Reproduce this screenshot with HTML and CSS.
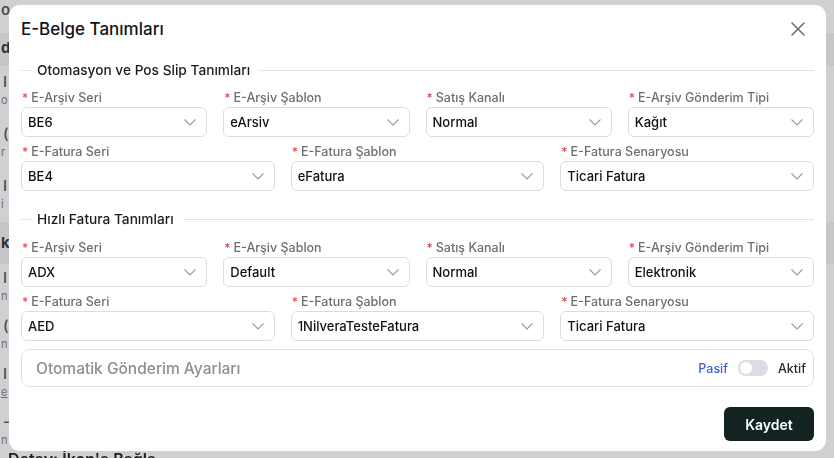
FILE: index.html
```html
<!DOCTYPE html>
<html lang="tr">
<head>
<meta charset="utf-8">
<title>E-Belge Tanımları</title>
<link rel="stylesheet" href="styles.css">
</head>
<body>
<div class="page">
  <div class="bg-top">o</div>
  <div class="bg-band">d</div>
  <div class="bg-item"><b>I</b><small>o</small></div>
  <div class="bg-item"><b>(</b><small>r</small></div>
  <div class="bg-item"><b>I</b><small>i</small></div>
  <div class="bg-band bg-band2">k</div>
  <div class="bg-item bg-tight"><b>I</b><small>n</small></div>
  <div class="bg-item bg-tight"><b>(</b><small>n</small></div>
  <div class="bg-item bg-tight"><b>I</b><small class="bg-link">e</small></div>
  <div class="bg-item bg-tight"><b>-</b><small>n</small></div>
  <div class="bg-foot">Detay: İkon'a Bağla</div>
</div>

<div class="modal">
  <header class="modal-head">
    <h1 class="modal-title">E-Belge Tanımları</h1>
    <button class="close" aria-label="Kapat">
      <svg width="14" height="14" viewBox="0 0 14 14"><path d="M1 1L13 13M13 1L1 13" stroke="#6b6b6b" stroke-width="1.5" fill="none" stroke-linecap="round"/></svg>
    </button>
  </header>

  <div class="modal-body">
    <div class="divider"><span class="divider-text">Otomasyon ve Pos Slip Tanımları</span></div>

    <div class="grid g4">
      <div class="field"><label class="label"><i>*</i>E-Arşiv Seri</label><div class="select"><span>BE6</span><svg class="chev" viewBox="0 0 12 7"><path d="M0.5 0.5L6 6L11.5 0.5"/></svg></div></div>
      <div class="field"><label class="label"><i>*</i>E-Arşiv Şablon</label><div class="select"><span>eArsiv</span><svg class="chev" viewBox="0 0 12 7"><path d="M0.5 0.5L6 6L11.5 0.5"/></svg></div></div>
      <div class="field"><label class="label"><i>*</i>Satış Kanalı</label><div class="select"><span>Normal</span><svg class="chev" viewBox="0 0 12 7"><path d="M0.5 0.5L6 6L11.5 0.5"/></svg></div></div>
      <div class="field"><label class="label"><i>*</i>E-Arşiv Gönderim Tipi</label><div class="select"><span>Kağıt</span><svg class="chev" viewBox="0 0 12 7"><path d="M0.5 0.5L6 6L11.5 0.5"/></svg></div></div>
    </div>
    <div class="grid g3">
      <div class="field"><label class="label"><i>*</i>E-Fatura Seri</label><div class="select"><span>BE4</span><svg class="chev" viewBox="0 0 12 7"><path d="M0.5 0.5L6 6L11.5 0.5"/></svg></div></div>
      <div class="field"><label class="label"><i>*</i>E-Fatura Şablon</label><div class="select"><span>eFatura</span><svg class="chev" viewBox="0 0 12 7"><path d="M0.5 0.5L6 6L11.5 0.5"/></svg></div></div>
      <div class="field"><label class="label"><i>*</i>E-Fatura Senaryosu</label><div class="select"><span>Ticari Fatura</span><svg class="chev" viewBox="0 0 12 7"><path d="M0.5 0.5L6 6L11.5 0.5"/></svg></div></div>
    </div>

    <div class="divider divider-2"><span class="divider-text">Hızlı Fatura Tanımları</span></div>

    <div class="grid g4">
      <div class="field"><label class="label"><i>*</i>E-Arşiv Seri</label><div class="select"><span>ADX</span><svg class="chev" viewBox="0 0 12 7"><path d="M0.5 0.5L6 6L11.5 0.5"/></svg></div></div>
      <div class="field"><label class="label"><i>*</i>E-Arşiv Şablon</label><div class="select"><span>Default</span><svg class="chev" viewBox="0 0 12 7"><path d="M0.5 0.5L6 6L11.5 0.5"/></svg></div></div>
      <div class="field"><label class="label"><i>*</i>Satış Kanalı</label><div class="select"><span>Normal</span><svg class="chev" viewBox="0 0 12 7"><path d="M0.5 0.5L6 6L11.5 0.5"/></svg></div></div>
      <div class="field"><label class="label"><i>*</i>E-Arşiv Gönderim Tipi</label><div class="select"><span>Elektronik</span><svg class="chev" viewBox="0 0 12 7"><path d="M0.5 0.5L6 6L11.5 0.5"/></svg></div></div>
    </div>
    <div class="grid g3">
      <div class="field"><label class="label"><i>*</i>E-Fatura Seri</label><div class="select"><span>AED</span><svg class="chev" viewBox="0 0 12 7"><path d="M0.5 0.5L6 6L11.5 0.5"/></svg></div></div>
      <div class="field"><label class="label"><i>*</i>E-Fatura Şablon</label><div class="select"><span>1NilveraTesteFatura</span><svg class="chev" viewBox="0 0 12 7"><path d="M0.5 0.5L6 6L11.5 0.5"/></svg></div></div>
      <div class="field"><label class="label"><i>*</i>E-Fatura Senaryosu</label><div class="select"><span>Ticari Fatura</span><svg class="chev" viewBox="0 0 12 7"><path d="M0.5 0.5L6 6L11.5 0.5"/></svg></div></div>
    </div>

    <div class="panel">
      <span class="panel-title">Otomatik Gönderim Ayarları</span>
      <div class="switch-wrap">
        <span class="sw-off">Pasif</span>
        <span class="switch"><span class="knob"></span></span>
        <span class="sw-on">Aktif</span>
      </div>
    </div>
  </div>

  <footer class="modal-foot">
    <button class="save">Kaydet</button>
  </footer>
</div>
</body>
</html>
```

FILE: styles.css
```css
* { box-sizing: border-box; }

html, body {
  margin: 0;
  padding: 0;
}

body {
  width: 834px;
  height: 458px;
  overflow: hidden;
  background: #d0d0d2;
  font-family: "Inter", "Noto Sans", sans-serif;
  color: #1a1a1a;
}

/* ---------- background page (behind the mask) ---------- */
.page {
  color: #4a4a4c;
  font-size: 15px;
}
.bg-top {
  height: 33px;
  padding: 2px 0 0 1px;
  line-height: 16px;
  font-weight: 600;
}
.bg-band {
  height: 33px;
  line-height: 30px;
  padding-left: 1px;
  background: #c6c6c8;
  font-weight: 700;
  color: #333;
}
.bg-band2 {
  height: 42px;
  line-height: 42px;
}
.bg-item {
  height: 52px;
  padding-top: 6px;
}
.bg-tight { height: 48px; padding-top: 4px; }
.bg-item b {
  display: block;
  font-weight: 500;
  line-height: 20px;
  padding-left: 3px;
}
.bg-item small {
  display: block;
  font-size: 11px;
  line-height: 16px;
  color: #6f6f71;
  padding-left: 1px;
}
.bg-link { text-decoration: underline; }
.bg-foot {
  position: fixed;
  left: 8px;
  top: 449px;
  font-size: 16px;
  font-weight: 600;
  color: #222;
}

/* ---------- modal ---------- */
.modal {
  position: fixed;
  left: 9px;
  top: 5px;
  width: 817px;
  height: 446px;
  background: #fff;
  border-radius: 11px;
  display: flex;
  flex-direction: column;
}

.modal-head {
  height: 48px;
  padding: 0 12px;
  display: flex;
  align-items: center;
  justify-content: space-between;
}
.modal-title {
  margin: 0;
  font-size: 17px;
  font-weight: 500;
  color: #141414;
}
.close {
  border: 0;
  background: none;
  padding: 0;
  width: 14px;
  height: 14px;
  margin-right: 9px;
  display: flex;
}

.modal-body {
  padding: 0 12px;
}

.divider {
  display: flex;
  align-items: center;
  height: 22px;
  margin: 6px 0 8px;
}
.divider::before,
.divider::after {
  content: "";
  height: 1px;
  background: #e3e3e5;
}
.divider::before { width: 10px; }
.divider::after { flex: 1; }
.divider-text {
  padding: 0 9px 0 6px;
  font-size: 13.7px;
  font-weight: 500;
  color: #1c1c1c;
  white-space: nowrap;
}
.divider-2 { margin-top: 17px; margin-bottom: 9px; }

.grid {
  display: grid;
  column-gap: 16px;
}
.g4 { grid-template-columns: repeat(4, 1fr); }
.g3 { grid-template-columns: repeat(3, 1fr); margin-top: 6px; }

.field { display: flex; flex-direction: column; }

.label {
  height: 18px;
  line-height: 18px;
  font-size: 12.5px;
  font-weight: 500;
  color: #6e6e6e;
  white-space: nowrap;
}
.label i {
  font-style: normal;
  color: #e5484d;
  margin: 0 3px 0 1px;
  font-size: 12px;
}

.select {
  height: 30px;
  border: 1px solid #dcdcdc;
  border-radius: 6px;
  display: flex;
  align-items: center;
  justify-content: space-between;
  padding: 0 10px 0 6px;
  font-size: 13px;
  font-weight: 500;
  color: #111;
}
.chev {
  width: 12px;
  height: 7px;
  fill: none;
  stroke: #9a9a9a;
  stroke-width: 1.1;
}

.panel {
  margin-top: 8px;
  height: 38px;
  border: 1px solid #e0e0e2;
  border-radius: 8px;
  display: flex;
  align-items: center;
  justify-content: space-between;
  padding: 0 7px 0 14px;
}
.panel-title {
  font-size: 15.5px;
  font-weight: 500;
  color: #8f8f8f;
}
.switch-wrap {
  display: flex;
  align-items: center;
  font-size: 12.5px;
  font-weight: 500;
}
.sw-off { color: #3a62d6; }
.sw-on { color: #2a2a2a; }
.switch {
  width: 30px;
  height: 16px;
  border-radius: 8px;
  background: #dcdde2;
  margin: 0 10px 0 10px;
  display: flex;
  align-items: center;
  padding-left: 2px;
}
.knob {
  width: 12px;
  height: 12px;
  border-radius: 50%;
  background: #fff;
}

.modal-foot {
  display: flex;
  justify-content: flex-end;
  padding: 20px 12px 0;
}
.save {
  width: 90px;
  height: 34px;
  border: 0;
  border-radius: 6px;
  background: #122322;
  color: #fff;
  font-family: inherit;
  font-size: 14px;
  font-weight: 600;
}
```
